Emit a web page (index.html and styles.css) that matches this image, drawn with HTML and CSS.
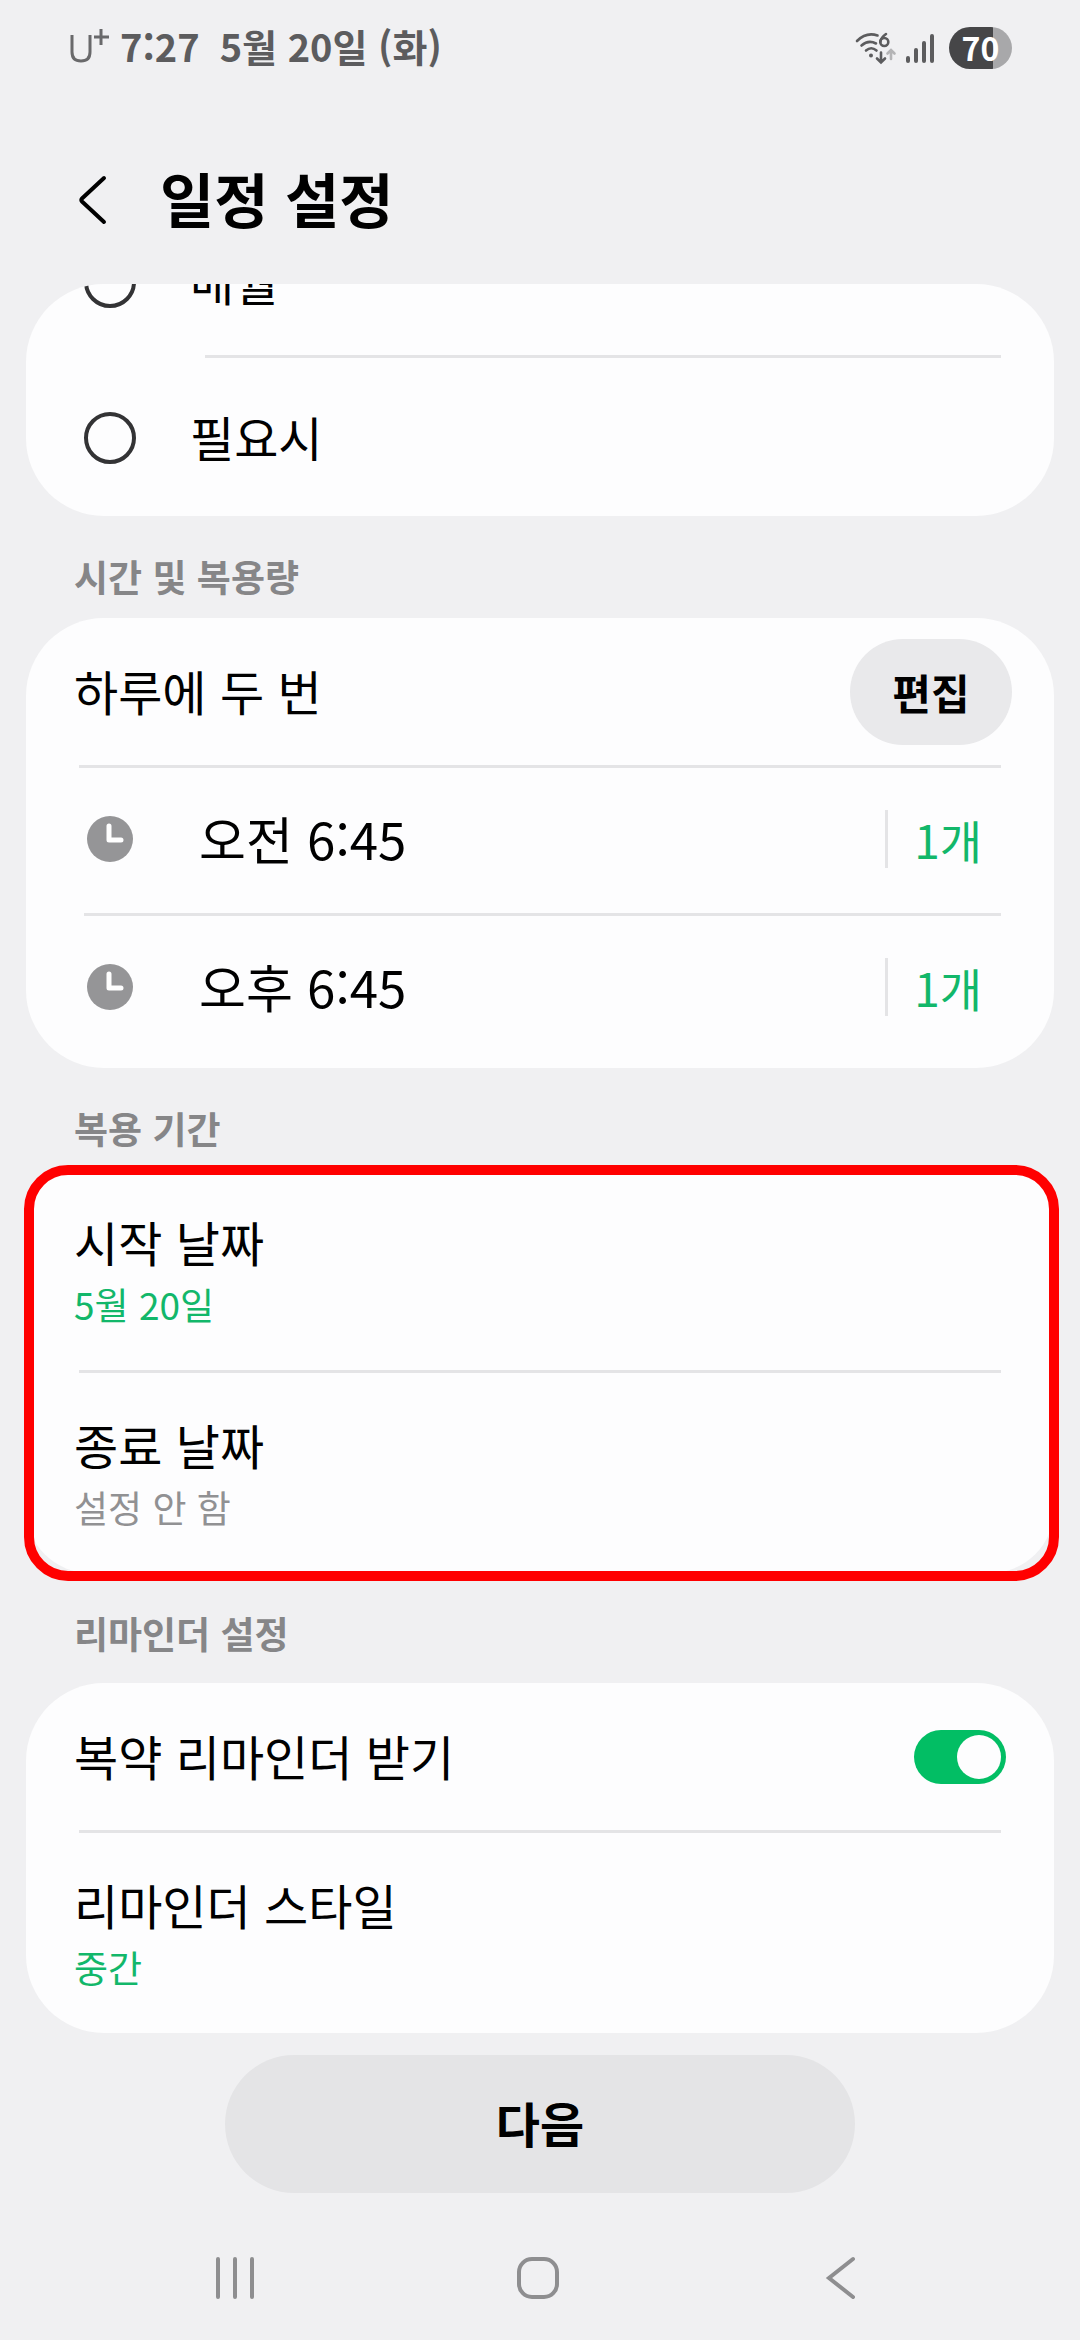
FILE: index.html
```html
<!DOCTYPE html>
<html lang="ko">
<head>
<meta charset="utf-8">
<meta name="viewport" content="width=device-width, initial-scale=1">
<title>일정 설정</title>
<link rel="stylesheet" href="styles.css">
</head>
<body>
<div class="status">
  <div class="status-left">
    <svg class="carrier" width="42" height="36" viewBox="0 0 42 36" aria-hidden="true"><path d="M2 7v17c0 6 3 9 9 9s9-3 9-9V7" /><path d="M31 1v16M24 9h15" /></svg>
    <span class="clock">7:27</span>
    <span class="date">5월 20일 (화)</span>
  </div>
  <div class="status-right">
    <svg width="42" height="36" viewBox="0 0 42 36" aria-hidden="true">
      <g fill="none" stroke="#5c5c5e" stroke-width="2.600" stroke-linecap="round">
        <path d="M2 11C8 5 15 3 22.500 5.500"/><path d="M6.500 15.500c4.500-4 9-5 14.500-2"/><path d="M11 20.500c3.500-3 7-3 10.500 0"/>
        <path d="M31 4c-3.500 2.500-5.500 5-5.700 8"/><circle cx="29.300" cy="12" r="4"/>
        <path d="M26 22.500v9.500m-4-3.500l4 4 4-4"/>
        <path stroke="#b4b4b6" d="M36 29v-8.500m-3.500 3l3.500-3.500 3.500 3.500"/>
      </g>
      <circle cx="16" cy="25.500" r="2" fill="#5c5c5e"/>
    </svg>
    <svg width="30" height="32" viewBox="0 0 30 32" aria-hidden="true"><path d="M3 26v3M11 18v11M19 11v18M27 4v25" fill="none" stroke="#5c5c5e" stroke-width="4" stroke-linecap="round"/></svg>
    <span class="battery">70</span>
  </div>
</div>

<header class="header">
  <button class="back" type="button" aria-label="뒤로">
    <svg width="30" height="52" viewBox="0 0 30 52" aria-hidden="true"><path d="M26 4L4 24.500Q2.500 26 4 27.500L26 48" fill="none" stroke="#000" stroke-width="4" stroke-linecap="round"/></svg>
  </button>
  <h1>일정 설정</h1>
</header>

<main>
  <section class="card card-scrolled">
    <label class="option"><input type="radio" name="repeat"><span>매월</span></label>
    <label class="option"><input type="radio" name="repeat"><span>필요시</span></label>
  </section>

  <h2>시간 및 복용량</h2>
  <section class="card card-times">
    <div class="row">
      <span class="label">하루에 두 번</span>
      <button class="edit" type="button">편집</button>
    </div>
    <div class="time">
      <svg class="time-icon" viewBox="0 0 46 46" aria-hidden="true"><circle cx="23" cy="23" r="23" fill="#959597"/><path d="M22 10v14h12" fill="none" stroke="#fff" stroke-width="5" stroke-linecap="round" stroke-linejoin="round"/></svg>
      <span class="time-text">오전 6:45</span>
      <span class="dose">1개</span>
    </div>
    <div class="time">
      <svg class="time-icon" viewBox="0 0 46 46" aria-hidden="true"><circle cx="23" cy="23" r="23" fill="#959597"/><path d="M22 10v14h12" fill="none" stroke="#fff" stroke-width="5" stroke-linecap="round" stroke-linejoin="round"/></svg>
      <span class="time-text">오후 6:45</span>
      <span class="dose">1개</span>
    </div>
  </section>

  <h2>복용 기간</h2>
  <section class="card card-marked">
    <div class="entry"><span class="label">시작 날짜</span><span class="value">5월 20일</span></div>
    <div class="entry"><span class="label">종료 날짜</span><span class="value value-off">설정 안 함</span></div>
  </section>

  <h2>리마인더 설정</h2>
  <section class="card">
    <div class="row">
      <label class="label" for="remind">복약 리마인더 받기</label>
      <input class="switch" id="remind" type="checkbox" role="switch" checked>
    </div>
    <div class="entry"><span class="label">리마인더 스타일</span><span class="value">중간</span></div>
  </section>
</main>

<button class="next" type="button">다음</button>

<nav class="nav">
  <button type="button" aria-label="최근 앱"><svg width="44" height="44" viewBox="0 0 44 44" aria-hidden="true"><path d="M5 3v38M22 3v38M39 3v38"/></svg></button>
  <button type="button" aria-label="홈"><svg width="44" height="44" viewBox="0 0 44 44" aria-hidden="true"><rect x="3" y="3" width="38" height="38" rx="13"/></svg></button>
  <button type="button" aria-label="뒤로"><svg width="44" height="44" viewBox="0 0 44 44" aria-hidden="true"><path d="M34 3L10 22l24 19"/></svg></button>
</nav>
</body>
</html>
```

FILE: styles.css
```css
* {
  box-sizing: border-box;
}

body {
  margin: 0;
  min-height: 100vh;
  display: flex;
  flex-direction: column;
  background: #f0f0f2;
  color: #000;
  font-family: "Noto Sans CJK KR", "Noto Sans", sans-serif;
  font-size: 48px;
  line-height: 68px;
}

button {
  border: 0;
  padding: 0;
  background: none;
  color: inherit;
  font: inherit;
}

svg {
  display: block;
}

/* Status bar */
.status {
  height: 92px;
  padding: 0 68px 0 70px;
  display: flex;
  align-items: center;
  justify-content: space-between;
  color: #5c5c5e;
  font-size: 38px;
  font-weight: 700;
}

.status-left,
.status-right {
  display: flex;
  align-items: center;
}

.carrier {
  margin-right: 8px;
  fill: none;
  stroke: #69696b;
  stroke-width: 3;
}

.date {
  margin-left: 20px;
}

.status-right {
  gap: 8px;
  padding-top: 4px;
}

.battery {
  width: 63px;
  height: 42px;
  margin-left: 6px;
  border-radius: 21px;
  background: linear-gradient(to right, #464648 70%, #a8a8aa 70%);
  color: #fff;
  font-size: 32px;
  line-height: 40px;
  text-align: center;
}

/* Title bar */
.header {
  height: 192px;
  padding: 20px 78px 0;
  display: flex;
  align-items: center;
  gap: 52px;
}

.back {
  padding-top: 4px;
}

h1 {
  margin: 0;
  font-size: 59px;
  font-weight: 700;
}

/* Sections */
main {
  padding: 0 26px;
}

h2 {
  margin: 0;
  padding: 32px 48px 14px;
  color: #868688;
  font-size: 37px;
  line-height: 56px;
  font-weight: 700;
}

.card {
  border-radius: 78px;
  background: #fdfdfe;
}

.card > * {
  position: relative;
}

.card > :not(:last-child)::after {
  content: "";
  position: absolute;
  left: 53px;
  right: 53px;
  bottom: 0;
  height: 3px;
  background: #e4e4e6;
}

/* The list is scrolled, so its first option is cut off at the top */
.card-scrolled {
  overflow: hidden;
  padding-bottom: 2px;
}

.option {
  height: 156px;
  padding: 4px 58px 0;
  display: flex;
  align-items: center;
  gap: 54px;
}

.option:first-child {
  margin-top: -82px;
}

.option span,
.row .label {
  padding-bottom: 4px;
}

.card > .option:not(:last-child)::after {
  left: 179px;
}

.option input {
  appearance: none;
  width: 52px;
  height: 52px;
  margin: 0;
  border: 4px solid #333335;
  border-radius: 50%;
}

.row {
  height: 150px;
  padding: 0 42px 3px 48px;
  display: flex;
  align-items: center;
  justify-content: space-between;
}

.edit {
  width: 162px;
  height: 106px;
  border-radius: 53px;
  background: #e9e9eb;
  font-size: 42px;
  font-weight: 700;
}

.card-times {
  padding-bottom: 4px;
}

.time {
  height: 148px;
  padding: 0 72px 6px 61px;
  display: flex;
  align-items: center;
}

.card > .time:not(:last-child)::after {
  left: 58px;
}

.time-icon {
  width: 46px;
  height: 46px;
}

.time-text {
  flex: 1;
  margin-left: 66px;
  padding-bottom: 2px;
  font-size: 51px;
}

.dose {
  padding-left: 26px;
  border-left: 3px solid #e4e4e6;
  color: #12b76a;
  font-size: 46px;
  line-height: 58px;
}

.entry {
  padding: 37px 48px;
  display: flex;
  flex-direction: column;
}

.entry:not(:last-child) {
  padding-bottom: 40px;
}

.value {
  color: #12b76a;
  font-size: 37px;
  line-height: 58px;
}

.value-off {
  color: #919193;
}

/* Highlight frame drawn over the period card */
.card-marked {
  position: relative;
  border-radius: 40px 40px 64px 64px;
}

.card-marked::before {
  content: "";
  position: absolute;
  inset: -5px -5px -8px -2px;
  border: 10px solid #f00;
  border-radius: 44px;
  pointer-events: none;
}

.card-marked + h2 {
  padding-bottom: 22px;
}

.switch {
  appearance: none;
  width: 92px;
  height: 54px;
  margin: 0 6px 0 0;
  padding: 5px;
  border-radius: 27px;
  background: #c4c4c6;
  display: flex;
}

.switch::before {
  content: "";
  width: 44px;
  height: 44px;
  border-radius: 50%;
  background: #fdfdfe;
}

.switch:checked {
  justify-content: flex-end;
  background: #02be64;
}

/* Bottom actions */
.next {
  width: 630px;
  max-width: 90%;
  height: 138px;
  margin: 22px auto 0;
  padding-bottom: 4px;
  border-radius: 69px;
  background: #e4e4e6;
  font-weight: 700;
}

.nav {
  height: 124px;
  margin-top: auto;
  padding: 0 88px 0 84px;
  display: grid;
  grid-template-columns: repeat(3, 1fr);
}

.nav button {
  display: flex;
  align-items: center;
  justify-content: center;
}

.nav svg {
  fill: none;
  stroke: #8e8e90;
  stroke-width: 4;
  stroke-linecap: round;
}
```
